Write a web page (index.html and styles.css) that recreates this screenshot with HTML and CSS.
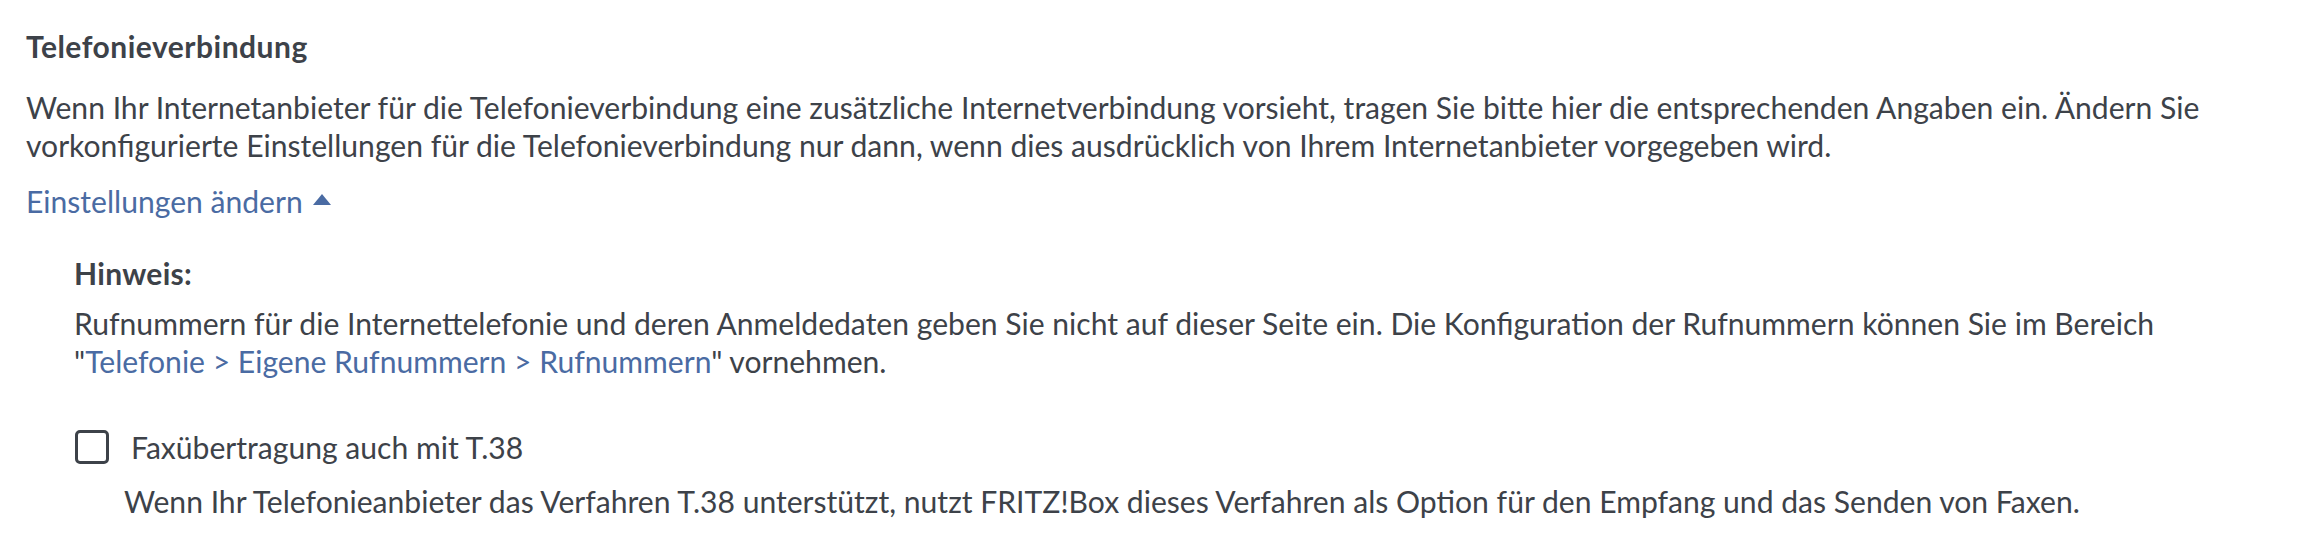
FILE: index.html
```html
<!DOCTYPE html>
<html lang="de">
<head>
    <meta charset="UTF-8">
    <title>Telefonieverbindung</title>
    <link rel="stylesheet" href="styles.css">
</head>
<body>
    <div class="page">
        <h2 class="title">Telefonieverbindung</h2>
        <p class="intro">Wenn Ihr Internetanbieter für die Telefonieverbindung eine zusätzliche Internetverbindung vorsieht, tragen Sie bitte hier die entsprechenden Angaben ein. Ändern Sie vorkonfigurierte Einstellungen für die Telefonieverbindung nur dann, wenn dies ausdrücklich von Ihrem Internetanbieter vorgegeben wird.</p>
        <a class="toggle" href="#">Einstellungen ändern
            <svg class="arrow" width="18" height="11" viewBox="0 0 18 11"><polygon points="9,0 18,11 0,11"/></svg>
        </a>

        <div class="settings">
            <div class="hint">
                <h3 class="hint-title">Hinweis:</h3>
                <p class="hint-text">Rufnummern für die Internettelefonie und deren Anmeldedaten geben Sie nicht auf dieser Seite ein. Die Konfiguration der Rufnummern können Sie im Bereich "<a href="#">Telefonie &gt; Eigene Rufnummern &gt; Rufnummern</a>" vornehmen.</p>
            </div>

            <div class="option">
                <label class="option-label">
                    <input type="checkbox" class="checkbox">
                    <span>Faxübertragung auch mit T.38</span>
                </label>
                <p class="option-text">Wenn Ihr Telefonieanbieter das Verfahren T.38 unterstützt, nutzt FRITZ!Box dieses Verfahren als Option für den Empfang und das Senden von Faxen.</p>
            </div>
        </div>
    </div>
</body>
</html>
```

FILE: styles.css
```css
body, html {
    margin: 0;
    padding: 0;
    background-color: #ffffff;
}
.page {
    padding: 27px 22px 0 26px;
    font-family: "Lato", "Open Sans", sans-serif;
    font-size: 30.1px;
    line-height: 38px;
    color: #3d4249;
}
p {
    margin: 0;
}
a {
    color: #4a6ba3;
    text-decoration: none;
}

.title {
    margin: 0 0 23px;
    font-size: 30px;
    font-weight: 700;
    letter-spacing: 0.5px;
    line-height: 38px;
}
.intro {
    margin-bottom: 18px;
}
.toggle {
    display: inline-flex;
    align-items: center;
    gap: 10px;
}
.arrow {
    fill: #4a6ba3;
    margin-top: -3px;
}

.settings {
    padding: 0 60px 0 48px;
}
.hint {
    margin-top: 34px;
}
.hint-title {
    margin: 0 0 12px;
    font-size: 30px;
    font-weight: 700;
    letter-spacing: 0.3px;
    line-height: 38px;
}

.option {
    margin-top: 48px;
}
.option-label {
    display: flex;
    align-items: center;
    gap: 22px;
}
.checkbox {
    appearance: none;
    margin: 0 0 0 1px;
    width: 34px;
    height: 34px;
    border: 3px solid #3d4249;
    border-radius: 5px;
    background-color: #ffffff;
}
.option-text {
    margin-top: 16px;
    padding-left: 50px;
}
```
